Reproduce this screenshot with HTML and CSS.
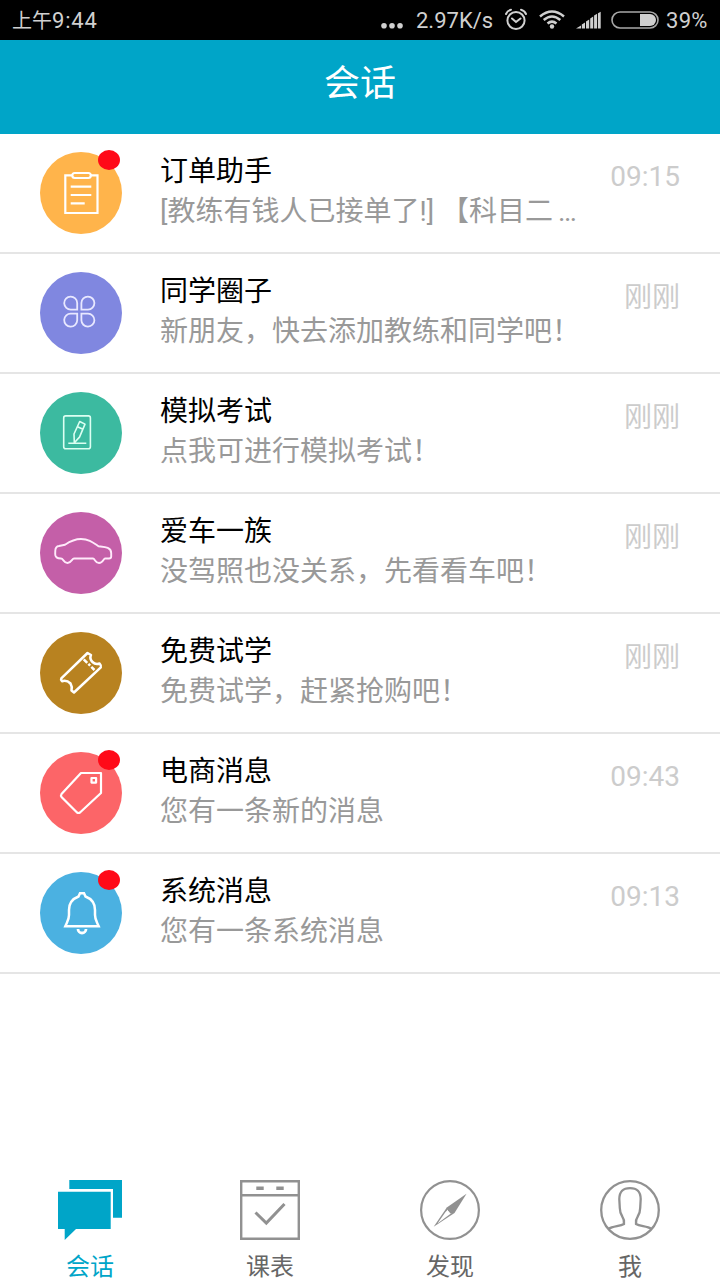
FILE: index.html
```html
<!DOCTYPE html>
<html lang="zh-CN">
<head>
<meta charset="utf-8">
<title>会话</title>
<link rel="stylesheet" href="styles.css">
</head>
<body>
<div class="app">
  <div class="status">
    <span class="clock"><span class="ampm">上午</span>9:44</span>
    <svg class="dots" width="24" height="40" viewBox="0 0 24 40"><g fill="#d0d0d0"><circle cx="4" cy="25.7" r="2.8"/><circle cx="12" cy="25.7" r="2.8"/><circle cx="20" cy="25.7" r="2.8"/></g></svg>
    <span class="speed">2.97K/s</span>
    <svg class="alarm" width="24" height="40" viewBox="0 0 24 40"><g fill="none" stroke="#d0d0d0" stroke-width="2" stroke-linecap="round"><circle cx="12" cy="20.5" r="8.6"/><path d="M8 18.5l4 3.5 4.5-3.5M2 14q1.500-3.500 5-4.300M22 14q-1.500-3.500-5-4.300"/></g></svg>
    <svg class="wifi" width="28" height="40" viewBox="0 0 28 40"><g fill="none" stroke="#d0d0d0" stroke-width="2.500"><path d="M2 16.500q12-10 24 0M5.700 20q8.300-7 16.600 0M9.500 23.500q4.500-3.700 9 0"/></g><circle cx="14" cy="26.500" r="2.200" fill="#d0d0d0"/></svg>
    <svg class="signal" width="26" height="40" viewBox="0 0 26 40"><path fill="#d0d0d0" d="M0 28.500l5-3v3zM5.800 24.500l3.200-2v6H5.800zM10 21.500l3.200-2v9h-3.200zM14.200 18.500l3-2v12h-3zM18.100 15.500l3-1.800v14.800h-3zM22 13.200l2.700-1.500v16.800H22z"/></svg>
    <svg class="battery" width="50" height="40" viewBox="0 0 50 40"><rect x="2" y="12" width="46" height="16" rx="8" fill="none" stroke="#a8a8a8" stroke-width="1.600"/><path fill="#d0d0d0" d="M30 14h10a6 6 0 0 1 0 12H30z"/></svg>
    <span class="percent">39%</span>
  </div>
  <header class="header">会话</header>

  <main class="list">
    <section class="row">
      <div class="avatar orange">
        <svg viewBox="0 0 82 82"><g fill="none" stroke="#fff" stroke-width="2.200"><path d="M32 23.300H25.300V61H57.500V23.300H51"/><rect x="32.300" y="21" width="18.500" height="5" rx="2.500"/><path d="M30.700 34.700h20.600M30.700 43h20.600M30.700 51.300h14"/></g></svg>
        <i class="dot"></i>
      </div>
      <div class="body"><div class="name">订单助手</div><div class="desc">[教练有钱人已接单了!] 【科目二 <span class="more">…</span></div></div>
      <div class="time">09:15</div>
    </section>
    <section class="row">
      <div class="avatar violet">
        <svg viewBox="0 0 82 82"><g fill="none" stroke="#e8e8ff" stroke-width="1.800"><path d="M37.200 37.600H31A6.500 6.500 0 1 1 37.200 31zM41.400 37.600H48A6.500 6.500 0 1 0 41.400 31zM37.200 41.600H31A6.500 6.500 0 1 0 37.200 48.200zM41.400 41.600H48A6.500 6.500 0 1 1 41.400 48.200z"/></g></svg>
      </div>
      <div class="body"><div class="name">同学圈子</div><div class="desc">新朋友，快去添加教练和同学吧！</div></div>
      <div class="time now">刚刚</div>
    </section>
    <section class="row">
      <div class="avatar green">
        <svg viewBox="0 0 82 82"><g fill="none" stroke="#dcfff2" stroke-width="1.600" stroke-linejoin="round"><rect x="23.700" y="23.900" width="26.700" height="32.800" rx="2"/><path d="M28.300 51.300h18M34.300 50.700l-.3-8.700L39.700 29.500l5.300 2.600-5.500 13zM37.500 34.800l5.500 2.500"/></g></svg>
      </div>
      <div class="body"><div class="name">模拟考试</div><div class="desc">点我可进行模拟考试！</div></div>
      <div class="time now">刚刚</div>
    </section>
    <section class="row">
      <div class="avatar magenta">
        <svg viewBox="0 0 82 82"><path fill="none" stroke="#ffeafa" stroke-width="1.900" stroke-linejoin="round" d="M15.300 38.500Q15.500 34.500 19 34L25 32.700C32 28 36 27 41 27C49 27 53 30.500 58.500 34.300C64 35 71.200 35 71.200 41V44.500Q71.200 46.500 69 46.500H65C63.500 46.500 63 51 59 51C55 51 55 46.500 53 46.500H34C32 46.500 31.500 51 27.500 51C23.500 51 23.500 46.500 21 46.500C17 46.500 15 45 15.200 42z"/></svg>
      </div>
      <div class="body"><div class="name">爱车一族</div><div class="desc">没驾照也没关系，先看看车吧！</div></div>
      <div class="time now">刚刚</div>
    </section>
    <section class="row">
      <div class="avatar brown">
        <svg viewBox="0 0 82 82"><g fill="none" stroke="#fff" stroke-width="2.500" stroke-linejoin="round"><path d="M47.500 21L21.300 46.300Q20.500 47.600 22 49.200C25 48.300 28 49 30.500 51.500C32 54 32 56.500 31.500 58.500L34 60.500L60.800 35.300Q61.500 33.500 59.600 31.500C57 32.500 54.500 32 52.500 30C50.500 28 49.800 25.500 51 23z"/><path d="M43.700 27.300L54.500 38" stroke-dasharray="5 1.600 2.500 1.600"/></g></svg>
      </div>
      <div class="body"><div class="name">免费试学</div><div class="desc">免费试学，赶紧抢购吧！</div></div>
      <div class="time now">刚刚</div>
    </section>
    <section class="row">
      <div class="avatar red">
        <svg viewBox="0 0 82 82"><g fill="none" stroke="#fff" stroke-width="2.200" stroke-linejoin="round"><path d="M41 21H61V41L40 60.500Q38.500 61.500 37 60.500L21.500 45Q20.500 43.500 21.500 42z"/><rect x="51.500" y="26" width="4.600" height="4.600"/></g></svg>
        <i class="dot"></i>
      </div>
      <div class="body"><div class="name">电商消息</div><div class="desc">您有一条新的消息</div></div>
      <div class="time">09:43</div>
    </section>
    <section class="row">
      <div class="avatar blue">
        <svg viewBox="0 0 82 82"><g fill="none" stroke="#fff" stroke-width="2.500"><path d="M25.300 54.300C27 50 29 48 29 43V38C29 31 32 27 38.500 24.500L40 21.300H44L45.500 24.500C52 27 55 31 55 38V43C55 48 57 50 58.700 54.300z"/><path d="M38 57a4 4 0 0 0 8 0" stroke-width="2.800"/></g></svg>
        <i class="dot"></i>
      </div>
      <div class="body"><div class="name">系统消息</div><div class="desc">您有一条系统消息</div></div>
      <div class="time">09:13</div>
    </section>
  </main>

  <nav class="tabs">
    <div class="tab active">
      <svg width="64" height="60" viewBox="0 0 64 60"><path fill="#00a5c8" d="M11.300 0H64V37.700H55V9H11.300zM0 11.700H52.700V49H18L6.700 60V49H0z"/></svg>
      <span>会话</span>
    </div>
    <div class="tab">
      <svg width="60" height="60" viewBox="0 0 60 60"><g fill="none" stroke="#919191" stroke-width="2.400"><path d="M1.200 1.200H58.800V58.800H1.200zM1 15.200H59"/><path d="M16.300 8.200h7.400M36.300 8.200h7.400" stroke-width="3.600"/><path d="M15.500 32.500L26.300 43 44.500 24" stroke-width="3"/></g></svg>
      <span>课表</span>
    </div>
    <div class="tab">
      <svg width="60" height="60" viewBox="0 0 60 60"><circle cx="30" cy="30" r="28.900" fill="none" stroke="#919191" stroke-width="2.200"/><path fill="#919191" d="M46.500 13.700L34.500 33 13.700 46.800 26.800 27.400z"/><path fill="#fff" d="M28.500 29l3.500 3.800-5.500 3.900-9 6.800 8-11.500z"/><path fill="#919191" d="M28 28l5 5-2.500.5-2.500-3z"/></svg>
      <span>发现</span>
    </div>
    <div class="tab">
      <svg width="60" height="60" viewBox="0 0 60 60"><g fill="none" stroke="#919191" stroke-width="2.300"><circle cx="30" cy="30" r="28.800"/><path d="M8.500 49C13 46 20 46.500 24 44C24.300 41 24 39 22.500 37C20.500 34 19.800 31 19.800 28L19.300 19C19.500 11 23 8.200 30 8.200C37 8.200 40.500 11 40.700 19L40.200 28C40.200 31 39.500 34 37.500 37C36 39 35.700 41 36 44C40 46.500 47 46 51.500 49"/></g></svg>
      <span>我</span>
    </div>
  </nav>
</div>
</body>
</html>
```

FILE: styles.css
```css
* { box-sizing: border-box; }

body {
  margin: 0;
  background: #fff;
  font-family: Roboto, "Noto Sans CJK SC", sans-serif;
}

.app {
  display: flex;
  flex-direction: column;
  width: 720px;
  height: 1280px;
  overflow: hidden;
}

svg { display: block; flex: none; }

.status {
  display: flex;
  flex: none;
  height: 40px;
  padding-left: 12px;
  background: #000;
  color: #d0d0d0;
  font-size: 22px;
  line-height: 41px;
  white-space: nowrap;
}

.clock { width: 368px; letter-spacing: 0.8px; }
.ampm { font-size: 20px; letter-spacing: 0; }
.speed { width: 78px; margin-left: 12px; }
.alarm { margin-left: 10px; }
.wifi { margin-left: 10px; }
.signal { margin-left: 10px; }
.battery { margin-left: 8px; }
.percent { margin-left: 6px; letter-spacing: 0.3px; }

.header {
  flex: none;
  height: 94px;
  background: #00a5c8;
  color: #fff;
  font-size: 36px;
  line-height: 88px;
  text-align: center;
}

.list { flex: 1; }

.row {
  display: flex;
  height: 120px;
  padding: 18px 40px 0;
  border-bottom: 2px solid #e5e5e5;
}

.avatar {
  position: relative;
  flex: none;
  width: 82px;
  height: 82px;
  border-radius: 50%;
}

.orange { background: #ffb44b; }
.violet { background: #8087e0; }
.green { background: #3cbaa0; }
.magenta { background: #c45fa8; }
.brown { background: #b88220; }
.red { background: #fc6568; }
.blue { background: #4bb1e1; }

.dot {
  position: absolute;
  top: -2px;
  left: 58px;
  width: 22px;
  height: 20px;
  border-radius: 11px / 10px;
  background: #ff0a18;
}

.body {
  flex: 1;
  margin-left: 38px;
  font-size: 28px;
  line-height: 40px;
  white-space: nowrap;
}

.name { color: #000; }
.desc { color: #999; }
.more { margin-left: -2px; }

.time {
  flex: none;
  color: #ccc;
  font-size: 28px;
  line-height: 50px;
}

.now { line-height: 52px; }

.tabs {
  display: grid;
  grid-template-columns: repeat(4, 1fr);
  flex: none;
  height: 100px;
}

.tab {
  display: flex;
  flex-direction: column;
  align-items: center;
  color: #666;
  font-size: 24px;
  line-height: 24px;
}

.tab span { margin-top: 15px; }
.active { color: #00a5c8; }
```
